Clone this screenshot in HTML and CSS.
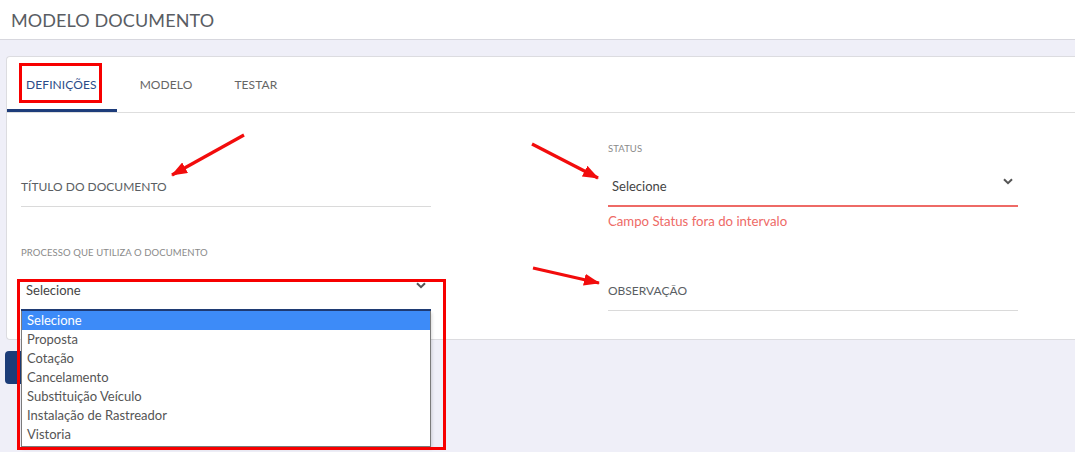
FILE: index.html
```html
<!DOCTYPE html>
<html lang="pt-BR">
<head>
<meta charset="utf-8">
<title>Modelo Documento</title>
<link rel="stylesheet" href="styles.css">
</head>
<body>
<header class="page-header">
  <h1 class="page-title">MODELO DOCUMENTO</h1>
</header>

<main class="page-body">
  <section class="card">
    <nav class="tabs">
      <a class="tab tab--active">DEFINIÇÕES</a>
      <a class="tab">MODELO</a>
      <a class="tab">TESTAR</a>
    </nav>

    <div class="form">
      <div class="field-group field-group--bare">
        <div class="field">
          <span class="placeholder">TÍTULO DO DOCUMENTO</span>
        </div>
      </div>

      <div class="field-group">
        <label class="field-label">STATUS</label>
        <div class="field field--select field--invalid">
          <span class="value value--status">Selecione</span>
          <svg class="chevron" width="10" height="7" viewBox="0 0 10 7"><path d="M1 1.2 L5 5.2 L9 1.2" fill="none" stroke="#555" stroke-width="2"/></svg>
        </div>
        <div class="field-error">Campo Status fora do intervalo</div>
      </div>

      <div class="field-group">
        <label class="field-label">PROCESSO QUE UTILIZA O DOCUMENTO</label>
        <div class="field field--select field--open">
          <span class="value">Selecione</span>
          <svg class="chevron" width="10" height="7" viewBox="0 0 10 7"><path d="M1 1.2 L5 5.2 L9 1.2" fill="none" stroke="#555" stroke-width="2"/></svg>
          <ul class="options">
            <li class="option option--selected">Selecione</li>
            <li class="option">Proposta</li>
            <li class="option">Cotação</li>
            <li class="option">Cancelamento</li>
            <li class="option">Substituição Veículo</li>
            <li class="option">Instalação de Rastreador</li>
            <li class="option">Vistoria</li>
          </ul>
        </div>
      </div>

      <div class="field-group field-group--bare">
        <div class="field">
          <span class="placeholder">OBSERVAÇÃO</span>
        </div>
      </div>
    </div>
  </section>

  <button class="btn-primary" aria-label="Salvar"></button>
</main>

<!-- highlight marks drawn over the form -->
<div class="marks">
  <div class="mark-box mark-box--tab"></div>
  <div class="mark-box mark-box--select"></div>
  <svg class="mark-arrows" width="1075" height="452" viewBox="0 0 1075 452">
    <defs>
      <marker id="head" markerUnits="userSpaceOnUse" markerWidth="16" markerHeight="12" refX="15" refY="6" orient="auto">
        <path d="M0 0 L16 6 L0 12 Z" fill="#f20c0c"/>
      </marker>
    </defs>
    <line x1="244" y1="135" x2="172" y2="175" stroke="#f20c0c" stroke-width="3.2" marker-end="url(#head)"/>
    <line x1="532" y1="144" x2="598" y2="178" stroke="#f20c0c" stroke-width="3.2" marker-end="url(#head)"/>
    <line x1="533" y1="268" x2="599" y2="283" stroke="#f20c0c" stroke-width="3.2" marker-end="url(#head)"/>
  </svg>
</div>
</body>
</html>
```

FILE: styles.css
```css
* {
  box-sizing: border-box;
}

html, body {
  margin: 0;
  padding: 0;
}

body {
  background: #efeff8;
  font-family: "Lato", "Noto Sans", sans-serif;
  color: #555;
  height: 452px;
  overflow: hidden;
  position: relative;
}

/* top bar */
.page-header {
  height: 40px;
  background: #fff;
  border-bottom: 1px solid #d7d7de;
  display: flex;
  align-items: center;
  padding-left: 11px;
}

.page-title {
  margin: 0;
  font-size: 18px;
  font-weight: 400;
  color: #595d63;
  letter-spacing: 0.1px;
}

.page-body {
  padding: 16px 0 0 5px;
}

/* card with tabs */
.card {
  margin-left: 1px;
  height: 284px;
  background: #fff;
  border: 1px solid #dcdce0;
  border-right: 0;
  border-radius: 4px 0 0 4px;
}

.tabs {
  display: flex;
  height: 56px;
  border-bottom: 1px solid #dedede;
}

.tab {
  display: flex;
  align-items: center;
  padding: 0 19px 0 23px;
  font-size: 12px;
  color: #666;
  letter-spacing: 0.1px;
}

.tab--active {
  color: #2b4b88;
  padding: 0 20px 0 19px;
  box-shadow: inset 0 -3px 0 #1d3c7a;
}

/* form grid */
.form {
  display: grid;
  grid-template-columns: 410px 410px;
  column-gap: 177px;
  row-gap: 14px;
  padding: 27px 0 0 14px;
}

.field-group {
  position: relative;
}

.field-group--bare {
  padding-top: 24px;
}

.field-label {
  display: block;
  height: 14px;
  line-height: 14px;
  margin: 2px 0 8px;
  font-size: 9.5px;
  color: #8a8a8a;
  letter-spacing: 0.1px;
}

.field {
  position: relative;
  height: 43px;
  display: flex;
  align-items: center;
  padding-top: 3px;
  border-bottom: 1px solid #dadada;
  font-size: 13px;
}

.placeholder {
  font-size: 12px;
  color: #5a5e63;
}

.value {
  flex: 1;
  padding-left: 5px;
  color: #444;
}

.value--status {
  padding-left: 4px;
}

.chevron {
  margin: 0 5px 9px 0;
}

.field--invalid {
  border-bottom: 2px solid #ee6a66;
}

.field--open {
  border-bottom: 2px solid #1f3b74;
}

.field-error {
  margin-top: 5px;
  line-height: 18px;
  font-size: 13.2px;
  color: #ee6a66;
}

/* native-style dropdown list */
.options {
  position: absolute;
  top: calc(100% + 2px);
  left: 0;
  width: 410px;
  margin: 0;
  padding: 0 0 2px;
  list-style: none;
  background: #fff;
  border: 1px solid #7b7b7b;
  border-top: 0;
  box-shadow: 1px 2px 3px rgba(0, 0, 0, 0.15);
  z-index: 5;
}

.option {
  height: 19px;
  line-height: 19px;
  padding-left: 5px;
  font-size: 13px;
  color: #555;
}

.option--selected {
  background: #3d8bf8;
  color: #fff;
}

/* save button under the card */
.btn-primary {
  display: block;
  margin-top: 11px;
  height: 33px;
  width: 90px;
  border: 0;
  border-radius: 4px;
  background: #1b3c78;
}

/* highlight marks */
.marks {
  position: absolute;
  inset: 0;
  pointer-events: none;
  z-index: 10;
}

.mark-box {
  position: absolute;
  border: 3px solid #f70000;
}

.mark-box--tab {
  left: 19px;
  top: 63px;
  width: 83px;
  height: 40px;
}

.mark-box--select {
  left: 17px;
  top: 279px;
  width: 429px;
  height: 171px;
}

.mark-arrows {
  position: absolute;
  left: 0;
  top: 0;
}
```
